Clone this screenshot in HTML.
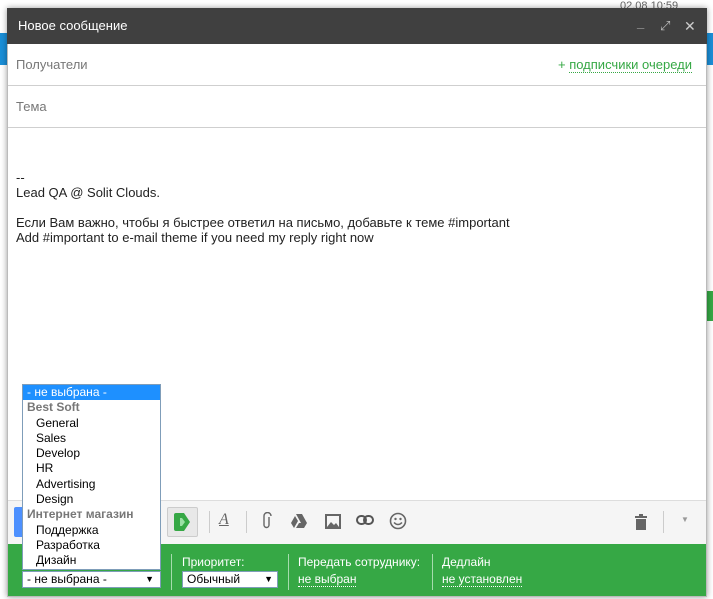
<!DOCTYPE html>
<html><head><meta charset="utf-8"><style>
*{margin:0;padding:0;box-sizing:border-box}
body{width:713px;height:599px;overflow:hidden;background:#fff;font-family:"Liberation Sans",Arial,sans-serif;position:relative}
.abs{position:absolute}
.win{left:7px;top:8px;width:700px;height:589px;background:#fff;border:1px solid #bbb;box-shadow:0 0 6px rgba(0,0,0,.4)}
.hdr{left:7px;top:8px;width:700px;height:36px;background:#404040;color:#fff;font-size:13px;line-height:36px;padding-left:11px}
.row{left:8px;width:698px;height:42px;border-bottom:1px solid #cfcfcf;font-size:13px;color:#777;line-height:42px;padding-left:8px}
.body{left:16px;top:170px;font-size:13px;color:#222;line-height:15px}
.tb{left:8px;top:500px;width:698px;height:44px;background:#f5f5f5;border-top:1px solid #ddd}
.ft{left:8px;top:544px;width:698px;height:52px;background:#36a845;color:#fff;font-size:12px}
.dd{left:22px;top:384px;width:139px;height:186px;background:#fff;border:1px solid #7f9db9;font-size:12px;color:#000}
.dd div{height:15.3px;line-height:15px;padding-left:13px}
.dd .g{color:#777;font-weight:bold;padding-left:4px}
.sel{background:#fff;border:1px solid #7f9db9;color:#000;font-size:12px;height:17px;line-height:15px;padding-left:4px}
.lnk{border-bottom:1px dotted #fff}
</style></head><body>
<div class="abs" style="left:0;top:33px;width:7px;height:32px;background:#1a8fd8"></div>
<div class="abs" style="left:706px;top:33px;width:7px;height:32px;background:#1a8fd8"></div>
<div class="abs" style="left:706px;top:291px;width:7px;height:30px;background:#36a845"></div>
<div class="abs" style="left:620px;top:0;font-size:11px;color:#666">02.08 10:59</div>
<div class="abs win"></div>
<div class="abs hdr">Новое сообщение
<span class="abs" style="left:630px;top:-3px;font-size:13px;color:#bbb;font-weight:bold">_</span>
<span class="abs" style="left:653px;top:0;font-size:13px;color:#bbb">⤢</span>
<span class="abs" style="left:677px;top:0;font-size:14px;color:#ccc">✕</span></div>
<div class="abs row" style="top:44px">Получатели<span class="abs" style="right:14px;top:0;color:#36a845">+ <span style="border-bottom:1px dotted #36a845">подписчики очереди</span></span></div>
<div class="abs row" style="top:86px">Тема</div>
<div class="abs body">--<br>Lead QA @ Solit Clouds.<br><br>Если Вам важно, чтобы я быстрее ответил на письмо, добавьте к теме #important<br>Add #important to e-mail theme if you need my reply right now</div>
<div class="abs tb">
<div class="abs" style="left:6px;top:6px;width:20px;height:30px;background:#4d90fe;border-radius:2px"></div>
<div class="abs" style="left:159px;top:6px;width:31px;height:30px;background:#e8e8e8;border:1px solid #ccc;border-radius:2px"></div>
<svg class="abs" style="left:166px;top:12px" width="17" height="18"><path d="M0 2q0-2 2-2h8l6 9-6 9H2q-2 0-2-2z" fill="#36a845"/><path d="M6 5h2l3 4-3 4H6z" fill="#9be0a5"/></svg>
<div class="abs" style="left:201px;top:10px;width:1px;height:22px;background:#ccc"></div>
<div class="abs" style="left:211px;top:10px;font-family:'Liberation Serif';font-style:italic;font-size:16px;color:#666;text-decoration:underline">A</div>
<div class="abs" style="left:238px;top:10px;width:1px;height:22px;background:#ccc"></div>
<svg class="abs" style="left:254px;top:11px" width="10" height="18"><path d="M7 5v8a2.5 2.5 0 0 1-5 0V4a3.5 3.5 0 0 1 7 0" fill="none" stroke="#666" stroke-width="1.4"/></svg>
<svg class="abs" style="left:283px;top:13px" width="16" height="14"><path d="M5 0h6l5 9h-6zM4 2l3 5-4 7-3-5zM5 14l3-5h8l-3 5z" fill="#666"/></svg>
<svg class="abs" style="left:317px;top:13px" width="16" height="15"><rect x="0" y="0" width="16" height="15" fill="#666"/><rect x="2" y="2" width="12" height="11" fill="#f5f5f5"/><path d="M2 13l4-5 3 3 2-2 3 4z" fill="#666"/></svg>
<svg class="abs" style="left:348px;top:14px" width="18" height="10"><rect x="1" y="1" width="9" height="8" rx="4" fill="none" stroke="#555" stroke-width="2"/><rect x="8" y="1" width="9" height="8" rx="4" fill="none" stroke="#555" stroke-width="2"/></svg>
<svg class="abs" style="left:381px;top:11px" width="18" height="18"><circle cx="9" cy="9" r="7.5" fill="none" stroke="#666" stroke-width="1.6"/><circle cx="6.5" cy="7" r="1.2" fill="#666"/><circle cx="11.5" cy="7" r="1.2" fill="#666"/><path d="M5 10.5q4 4 8 0" fill="none" stroke="#666" stroke-width="1.5"/></svg>
<svg class="abs" style="left:627px;top:13px" width="12" height="16"><rect x="0" y="2" width="12" height="2" fill="#666"/><rect x="4" y="0" width="4" height="2" fill="#666"/><rect x="1" y="5" width="10" height="11" fill="#666"/></svg>
<div class="abs" style="left:655px;top:10px;width:1px;height:22px;background:#ccc"></div>
<div class="abs" style="left:673px;top:14px;font-size:8px;color:#999">▼</div>
</div>
<div class="abs ft">
<div class="abs" style="left:163px;top:10px;width:1px;height:36px;background:#a6dcad"></div>
<div class="abs" style="left:174px;top:11px">Приоритет:</div>
<div class="abs sel" style="left:174px;top:27px;width:96px">Обычный<span class="abs" style="right:4px;font-size:9px">▼</span></div>
<div class="abs" style="left:280px;top:10px;width:1px;height:36px;background:#a6dcad"></div>
<div class="abs" style="left:290px;top:11px">Передать сотруднику:<br><span class="lnk" style="line-height:20px">не выбран</span></div>
<div class="abs" style="left:424px;top:10px;width:1px;height:36px;background:#a6dcad"></div>
<div class="abs" style="left:434px;top:11px">Дедлайн<br><span class="lnk" style="line-height:20px">не установлен</span></div>
</div>
<div class="abs sel" style="left:22px;top:571px;width:139px">- не выбрана -<span class="abs" style="right:6px;font-size:9px">▼</span></div>
<div class="abs dd">
<div style="background:#1e90ff;color:#fff;padding-left:4px">- не выбрана -</div>
<div class="g">Best Soft</div>
<div>General</div><div>Sales</div><div>Develop</div><div>HR</div><div>Advertising</div><div>Design</div>
<div class="g">Интернет магазин</div>
<div>Поддержка</div><div>Разработка</div><div>Дизайн</div>
</div>
</body></html>
